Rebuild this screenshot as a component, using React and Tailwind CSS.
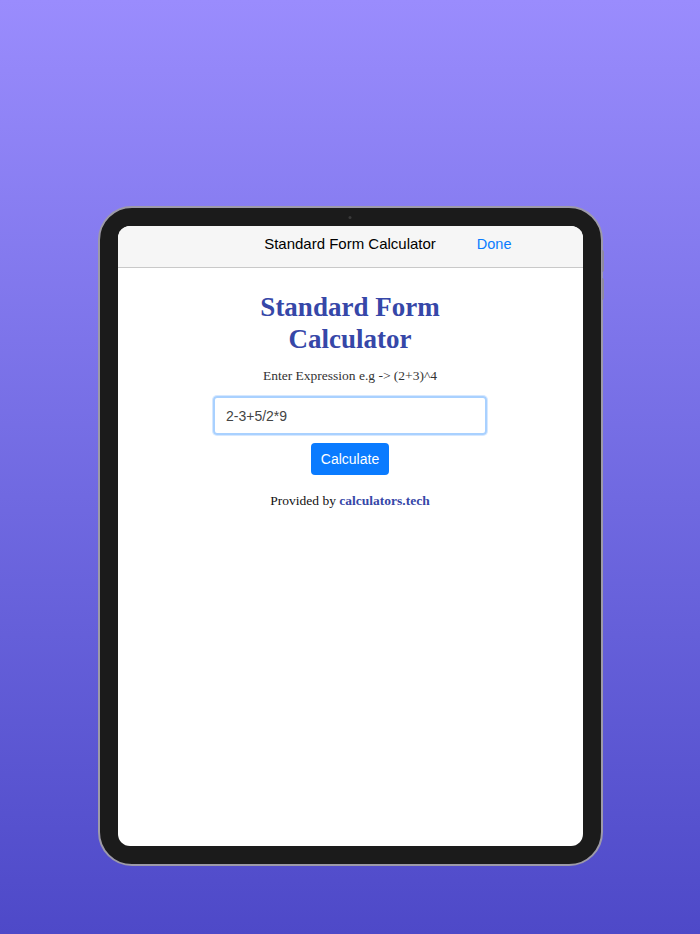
export default function App() {
  return (
    <div className="h-[934px] w-full overflow-hidden bg-gradient-to-b from-[#9a8cfd] to-[#4e49c8] pt-[206px]">
      {/* Device */}
      <div className="relative mx-auto w-[505px] h-[660px] rounded-[34px] border-2 border-[#9d9aa8] bg-[#1b1b1b] p-[18px]">
        {/* side buttons */}
        <div className="absolute -right-[3px] top-[42px] h-[22px] w-[2px] rounded-r bg-[#8e8aa0]" />
        <div className="absolute -right-[3px] top-[70px] h-[22px] w-[2px] rounded-r bg-[#8e8aa0]" />
        {/* camera */}
        <div className="absolute left-1/2 top-[8px] h-[3px] w-[3px] -translate-x-1/2 rounded-full bg-[#3a3a3a]" />

        {/* Screen */}
        <div className="flex h-full w-full flex-col overflow-hidden rounded-[12px] bg-white">
          <header className="relative flex h-[42px] shrink-0 items-center justify-center border-b border-[#c9c9c9] bg-[#f6f6f6] pb-[4px]" style={{ fontFamily: '"Liberation Sans", Arial, sans-serif' }}>
            <h1 className="text-[15px] font-medium text-black">Standard Form Calculator</h1>
            <span className="absolute right-[71px] text-[14.5px] font-medium text-[#0a7cff]">Done</span>
          </header>

          <div className="flex flex-col items-center pt-[23px]">
            <h2
              className="text-center text-[27px] font-bold leading-[32px] text-[#3647a8]"
              style={{ fontFamily: '"Liberation Serif", "Times New Roman", serif' }}
            >
              Standard Form
              <br />
              Calculator
            </h2>
            <p
              className="mt-[11px] text-[13.5px] text-[#333]"
              style={{ fontFamily: '"Liberation Serif", "Times New Roman", serif' }}
            >
              Enter Expression e.g -&gt; (2+3)^4
            </p>
            <input
              defaultValue="2-3+5/2*9"
              className="mt-[10px] h-[39px] w-[274px] rounded-[4px] border-2 border-[#a9d1ff] px-[11px] text-[14px] text-[#444] shadow-[0_0_0_1px_#d6e8ff] outline-none"
              style={{ fontFamily: '"Liberation Sans", Arial, sans-serif' }}
            />
            <button
              className="mt-[8px] h-[32px] w-[78px] rounded-[4px] bg-[#0a7bff] text-[14px] text-white"
              style={{ fontFamily: '"Liberation Sans", Arial, sans-serif' }}
            >
              Calculate
            </button>
            <p
              className="mt-[16px] text-[13.5px] text-[#111]"
              style={{ fontFamily: '"Liberation Serif", "Times New Roman", serif' }}
            >
              Provided by <span className="font-bold text-[#3647a8]">calculators.tech</span>
            </p>
          </div>
        </div>
      </div>
    </div>
  )
}
